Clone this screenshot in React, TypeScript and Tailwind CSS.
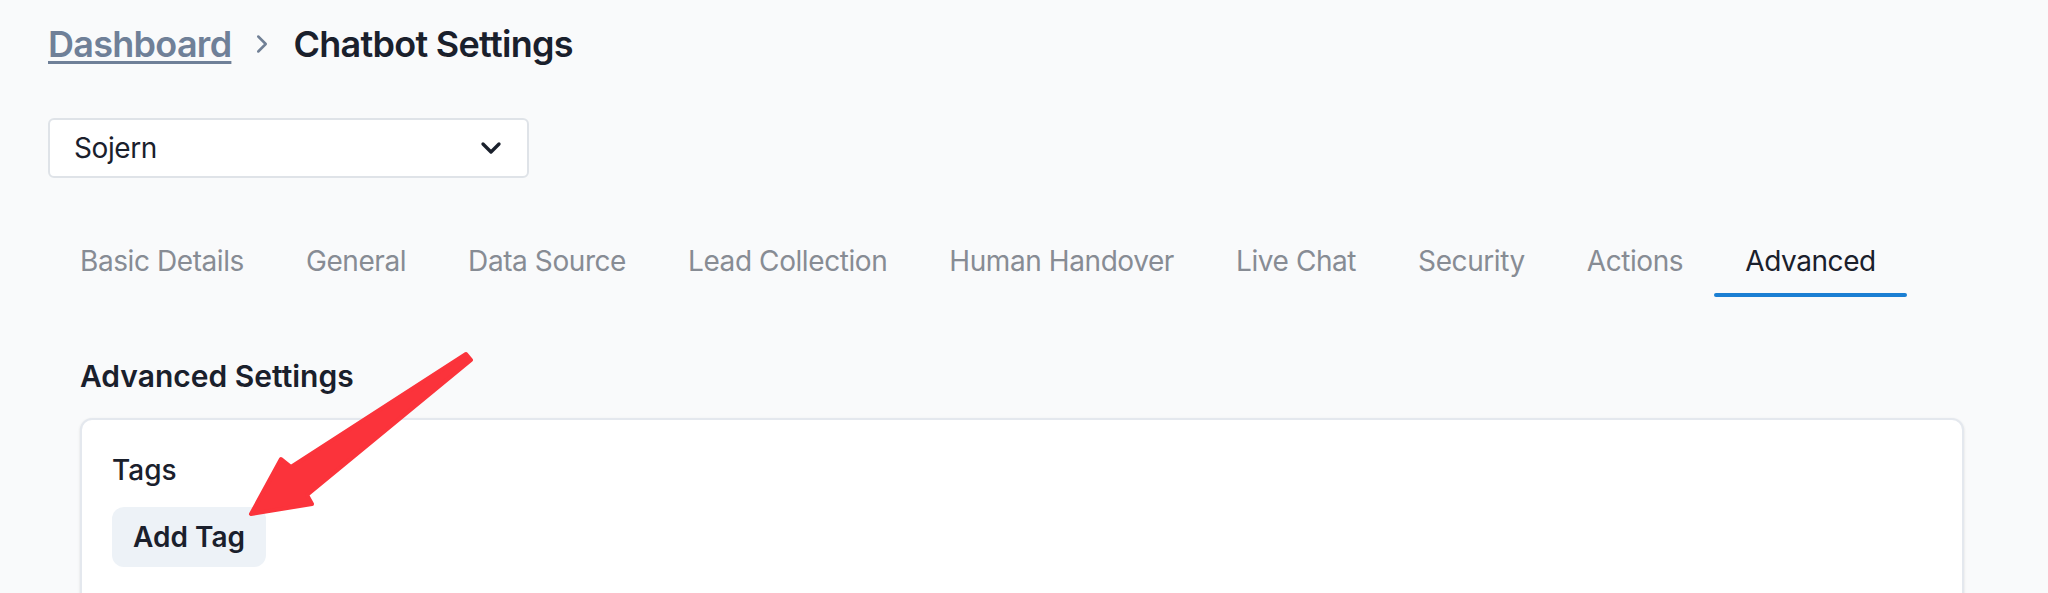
import { ChevronDown, ChevronRight } from 'lucide-react';

const tabs = [
  'Basic Details',
  'General',
  'Data Source',
  'Lead Collection',
  'Human Handover',
  'Live Chat',
  'Security',
  'Actions',
  'Advanced',
];

export default function App() {
  const activeTab = 'Advanced';

  return (
    <div className="relative h-[593px] overflow-hidden bg-[#f9fafb] font-['Inter','Noto_Sans',sans-serif] text-[#1a202c]">
      <div className="px-12 pt-4">
        {/* breadcrumb */}
        <div className="flex h-[56px] items-center text-[36px] leading-[56px] font-semibold tracking-[-0.02em]">
          <a className="text-[#6f8098] underline decoration-[3px] underline-offset-[4px]">Dashboard</a>
          <ChevronRight size={30} strokeWidth={2} className="mx-4 text-[#718096]" />
          <span className="text-[#1a202c]">Chatbot Settings</span>
        </div>

        {/* bot selector */}
        <div className="mt-[46px] flex h-[60px] w-[481px] items-center justify-between rounded-[6px] border-2 border-[#dfe3e8] bg-white pl-[24px] pr-[20px] text-[28px] tracking-[-0.015em]">
          <span>Sojern</span>
          <ChevronDown size={32} strokeWidth={2.5} className="text-[#1a202c]" />
        </div>

        {/* tabs */}
        <div className="mt-[51px] flex pl-[1px]">
          {tabs.map((tab) => (
            <div key={tab} className="flex flex-col px-[31px] pt-3">
              <span
                className={
                  tab === activeTab
                    ? 'text-[28px] leading-[40px] tracking-[-0.015em] text-[#1a202c]'
                    : 'text-[28px] leading-[40px] tracking-[-0.015em] text-[#878c94]'
                }
              >
                {tab}
              </span>
              <div
                className={
                  tab === activeTab
                    ? 'mt-3 -mx-[31px] h-[4px] rounded-full bg-[#1b7fd3]'
                    : 'mt-3 -mx-[31px] h-[4px]'
                }
              />
            </div>
          ))}
        </div>

        {/* panel */}
        <div className="pl-8 pr-9">
          <h2 className="mt-[59px] text-[30px] leading-[40px] font-semibold">Advanced Settings</h2>
          <div className="mt-[22px] h-[400px] rounded-[12px] border-2 border-[#e4e8ee] bg-white px-[30px] pt-[30px] shadow-sm">
            <div className="text-[28px] leading-[40px] font-medium">Tags</div>
            <button className="mt-[17px] flex h-[60px] w-[154px] items-center justify-center rounded-[12px] bg-[#edf2f7] text-[28px] font-semibold text-[#1a202c]">
              Add Tag
            </button>
          </div>
        </div>
      </div>

      {/* annotation arrow */}
      <svg
        className="pointer-events-none absolute left-0 top-0"
        width="2048"
        height="593"
        viewBox="0 0 2048 593"
      >
        <path
          d="M466 354 L291 467 L281 459 L251 514 L312 504 L307 495 L471 360 Z"
          fill="#fb333b"
          stroke="#fb333b"
          strokeWidth="4"
          strokeLinejoin="round"
        />
      </svg>
    </div>
  );
}
